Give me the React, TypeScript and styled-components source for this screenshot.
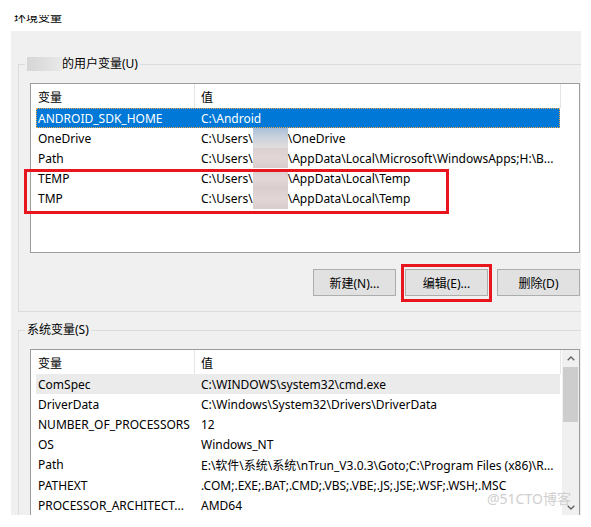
import React from 'react';
import styled, { createGlobalStyle, css } from 'styled-components';

const GlobalStyle = createGlobalStyle`
  html, body { margin: 0; padding: 0; background: #fff; }
  body {
    font-family: "Noto Sans", "Noto Sans CJK SC", sans-serif;
    font-size: 12px;
    color: #000;
  }
`;

const Page = styled.div`
  position: relative;
  width: 591px;
  height: 527px;
  overflow: hidden;
  background: #fff;
`;

const TitleBar = styled.div`
  height: 31px;
  box-sizing: border-box;
  padding: 15px 0 0 14px;
`;

const TitleClip = styled.div`
  height: 8px;
  overflow: hidden;
`;

const TitleText = styled.div`
  margin-top: -4px;
  line-height: 12px;
  font-size: 12px;
  font-family: "Noto Sans CJK SC", sans-serif;
`;

const Panel = styled.div`
  margin-left: 11px;
  width: 570px;
  height: 484px;
  box-sizing: border-box;
  padding-top: 25px;
  background: #f0f0f0;
  overflow: hidden;
`;

const Group = styled.fieldset<{ $gap?: number }>`
  margin: ${p => p.$gap ?? 0}px 0 0 7px;
  width: 580px;
  min-width: 0;
  box-sizing: border-box;
  border: 1px solid #dcdcdc;
  padding: 0 11px 15px 11px;
`;

const Legend = styled.legend`
  margin-left: -5px;
  padding: 0 2px;
  line-height: 16px;
  height: 16px;
  white-space: nowrap;
`;

const NameBlur = styled.span`
  display: inline-block;
  width: 35px;
  height: 14px;
  vertical-align: -3px;
  background: linear-gradient(90deg, #d6d6d6, #e2e2e2 70%, #eaeaea);
`;

const List = styled.div<{ $h: number }>`
  margin-top: 11px;
  width: 550px;
  height: ${p => p.$h}px;
  box-sizing: border-box;
  border: 1px solid #9c9c9c;
  background: #fff;
`;

const ScrollList = styled(List)`
  display: flex;
`;

const ListBody = styled.div`
  flex: 1;
  min-width: 0;
`;

const Header = styled.div`
  display: flex;
  height: 24px;
`;

const HeadCell = styled.div<{ $w: number; $pad: number }>`
  width: ${p => p.$w}px;
  padding-left: ${p => p.$pad}px;
  box-sizing: border-box;
  border-right: 1px solid #e5e5e5;
  display: flex;
  align-items: center;
  font-family: "Noto Sans CJK SC", sans-serif;
`;

const Rows = styled.div`
  padding-left: 5px;
`;

const Row = styled.div<{ $state?: 'focus' | 'dim' }>`
  display: flex;
  align-items: center;
  width: 524px;
  height: 20.2px;
  white-space: nowrap;
  ${p =>
    p.$state === 'focus' &&
    css`
      background: #0078d7;
      color: #fff;
      outline: 1px dotted #f0a848;
      outline-offset: -1px;
    `}
  ${p =>
    p.$state === 'dim' &&
    css`
      background: #ebebeb;
    `}
`;

const NameCell = styled.div`
  width: 163px;
  padding-left: 2px;
  box-sizing: border-box;
  overflow: hidden;
`;

const ValueCell = styled.div`
  flex: 1;
  padding-left: 2px;
  overflow: hidden;
  display: flex;
  align-items: center;
`;

const Blur = styled.span<{ $tone: 'blue' | 'rose' }>`
  display: inline-block;
  width: 35px;
  height: 20px;
  flex: none;
  background: ${p =>
    p.$tone === 'blue'
      ? 'linear-gradient(180deg, #a9bfd9 0%, #c9d2dd 45%, #e2dddd 100%)'
      : 'linear-gradient(180deg, #dccfd0 0%, #e3d6d6 50%, #d9cccd 100%)'};
`;

const Marked = styled.div<{ $left: number; $width: number; $bottom: number }>`
  position: relative;
  &::after {
    content: '';
    position: absolute;
    top: 0;
    left: ${p => p.$left}px;
    width: ${p => p.$width}px;
    bottom: ${p => p.$bottom}px;
    border: 3px solid #e8141e;
    box-sizing: border-box;
    pointer-events: none;
  }
`;

const ButtonRow = styled.div`
  display: flex;
  justify-content: flex-end;
  gap: 9px;
  margin-top: 16px;
  width: 550px;
`;

const Button = styled.button`
  width: 83px;
  height: 27px;
  padding: 0;
  background: #e1e1e1;
  border: 1px solid #adadad;
  font: inherit;
  color: #000;
`;

const MarkedButton = styled.span`
  position: relative;
  display: inline-flex;
  &::after {
    content: '';
    position: absolute;
    top: -5px;
    left: -4px;
    right: -4px;
    bottom: -6px;
    border: 3px solid #e8141e;
    pointer-events: none;
  }
`;

const ScrollBar = styled.div`
  width: 17px;
  display: flex;
  flex-direction: column;
  background: #f0f0f0;
`;

const ArrowBtn = styled.div`
  height: 17px;
  flex: none;
  display: flex;
  align-items: center;
  justify-content: center;
`;

const Thumb = styled.div`
  height: 55px;
  width: 15px;
  margin-left: 1px;
  background: #cdcdcd;
  flex: none;
`;

const Spacer = styled.div`
  flex: 1;
`;

const Watermark = styled.div`
  position: absolute;
  left: 487px;
  top: 488px;
  font-size: 14px;
  color: #cfcfcf;
  font-family: "Noto Sans", "Noto Sans CJK SC", sans-serif;
  white-space: nowrap;
`;

const Chevron = ({ up }: { up?: boolean }) => (
  <svg width="8" height="5" viewBox="0 0 8 5">
    <path
      d={up ? 'M0.7 4.3 L4 1 L7.3 4.3' : 'M0.7 0.7 L4 4 L7.3 0.7'}
      fill="none"
      stroke="#606060"
      strokeWidth="1.3"
    />
  </svg>
);

type Val = (string | { blur: 'blue' | 'rose' })[];

const ValueText = ({ parts }: { parts: Val }) => (
  <ValueCell>
    {parts.map((p, i) =>
      typeof p === 'string' ? <span key={i}>{p}</span> : <Blur key={i} $tone={p.blur} />
    )}
  </ValueCell>
);

const sysVars: [string, string][] = [
  ['ComSpec', 'C:\\WINDOWS\\system32\\cmd.exe'],
  ['DriverData', 'C:\\Windows\\System32\\Drivers\\DriverData'],
  ['NUMBER_OF_PROCESSORS', '12'],
  ['OS', 'Windows_NT'],
  ['Path', 'E:\\软件\\系统\\系统\\nTrun_V3.0.3\\Goto;C:\\Program Files (x86)\\R...'],
  ['PATHEXT', '.COM;.EXE;.BAT;.CMD;.VBS;.VBE;.JS;.JSE;.WSF;.WSH;.MSC'],
  ['PROCESSOR_ARCHITECT...', 'AMD64'],
];

const ListHeader = () => (
  <Header>
    <HeadCell $w={164} $pad={7}>变量</HeadCell>
    <HeadCell $w={366} $pad={6}>值</HeadCell>
  </Header>
);

export default function App() {
  const temp: Val = ['C:\\Users\\', { blur: 'rose' }, '\\AppData\\Local\\Temp'];
  return (
    <Page>
      <GlobalStyle />
      <TitleBar>
        <TitleClip>
          <TitleText>环境变量</TitleText>
        </TitleClip>
      </TitleBar>
      <Panel>
        <Group>
          <Legend>
            <NameBlur />
            的用户变量(U)
          </Legend>
          <List $h={170}>
            <ListHeader />
            <Rows>
              <Row $state="focus">
                <NameCell>ANDROID_SDK_HOME</NameCell>
                <ValueText parts={['C:\\Android']} />
              </Row>
              <Row>
                <NameCell>OneDrive</NameCell>
                <ValueText parts={['C:\\Users\\', { blur: 'blue' }, '\\OneDrive']} />
              </Row>
              <Row>
                <NameCell>Path</NameCell>
                <ValueText
                  parts={[
                    'C:\\Users\\',
                    { blur: 'rose' },
                    '\\AppData\\Local\\Microsoft\\WindowsApps;H:\\B...',
                  ]}
                />
              </Row>
              <Marked $left={-12} $width={425} $bottom={-5}>
                <Row>
                  <NameCell>TEMP</NameCell>
                  <ValueText parts={temp} />
                </Row>
                <Row>
                  <NameCell>TMP</NameCell>
                  <ValueText parts={temp} />
                </Row>
              </Marked>
            </Rows>
          </List>
          <ButtonRow>
            <Button>新建(N)...</Button>
            <MarkedButton>
              <Button>编辑(E)...</Button>
            </MarkedButton>
            <Button>删除(D)</Button>
          </ButtonRow>
        </Group>
        <Group $gap={10}>
          <Legend>系统变量(S)</Legend>
          <ScrollList $h={168}>
            <ListBody>
              <ListHeader />
              <Rows>
                {sysVars.map(([n, v], i) => (
                  <Row key={n} $state={i === 0 ? 'dim' : undefined}>
                    <NameCell>{n}</NameCell>
                    <ValueText parts={[v]} />
                  </Row>
                ))}
              </Rows>
            </ListBody>
            <ScrollBar>
              <ArrowBtn>
                <Chevron up />
              </ArrowBtn>
              <Thumb />
              <Spacer />
              <ArrowBtn>
                <Chevron />
              </ArrowBtn>
            </ScrollBar>
          </ScrollList>
        </Group>
      </Panel>
      <Watermark>@51CTO博客</Watermark>
    </Page>
  );
}
